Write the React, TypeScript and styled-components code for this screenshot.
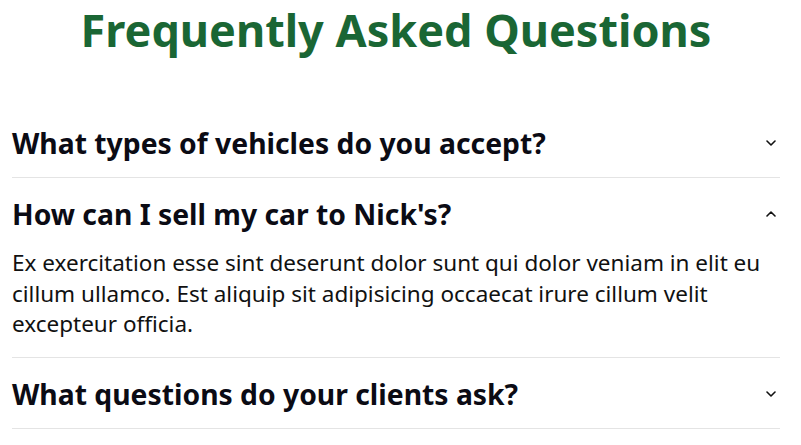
import React, { useState } from "react";
import styled, { createGlobalStyle } from "styled-components";

const Global = createGlobalStyle`
  html, body { margin: 0; padding: 0; background: #ffffff; }
  body { font-family: "Noto Sans", "Open Sans", sans-serif; color: #111111; }
`;

const Page = styled.main`
  padding: 0 21px 0 12px;
`;

const Title = styled.h1`
  margin: 0;
  padding: 0;
  height: 107px;
  box-sizing: border-box;
  text-align: center;
  font-size: 45px;
  line-height: 60px;
  font-weight: 700;
  color: #1a6634;
`;

const List = styled.div`
  display: flex;
  flex-direction: column;
`;

const Item = styled.section`
  border-bottom: 1px solid #e4e4e4;
`;

const Header = styled.button`
  all: unset;
  box-sizing: border-box;
  display: flex;
  width: 100%;
  align-items: center;
  justify-content: space-between;
  height: 70px;
  padding-top: 2px;
  cursor: pointer;
`;

const Question = styled.h2`
  margin: 0;
  font-size: 28.3px;
  font-weight: 700;
  color: #0b0b14;
  line-height: 36px;
`;

const Chevron = styled.svg<{ $open: boolean }>`
  width: 10px;
  height: 6px;
  margin-right: 4px;
  transform: ${(p) => (p.$open ? "rotate(180deg)" : "none")};
`;

const Answer = styled.p`
  margin: 0;
  padding: 0 0 17px;
  font-size: 22.5px;
  line-height: 30.5px;
  color: #111111;
`;

const faqs = [
  { q: "What types of vehicles do you accept?", a: "" },
  {
    q: "How can I sell my car to Nick's?",
    a: "Ex exercitation esse sint deserunt dolor sunt qui dolor veniam in elit eu cillum ullamco. Est aliquip sit adipisicing occaecat irure cillum velit excepteur officia.",
  },
  { q: "What questions do your clients ask?", a: "" },
];

export default function App() {
  const [open, setOpen] = useState<number>(1);
  return (
    <Page>
      <Global />
      <Title>Frequently Asked Questions</Title>
      <List>
        {faqs.map((f, i) => (
          <Item key={i}>
            <Header onClick={() => setOpen(open === i ? -1 : i)}>
              <Question>{f.q}</Question>
              <Chevron $open={open === i} viewBox="0 0 10 6" fill="none">
                <path d="M1 1l4 4 4-4" stroke="#111" strokeWidth="1.6" strokeLinecap="round" strokeLinejoin="round" />
              </Chevron>
            </Header>
            {open === i && <Answer>{f.a}</Answer>}
          </Item>
        ))}
      </List>
    </Page>
  );
}
